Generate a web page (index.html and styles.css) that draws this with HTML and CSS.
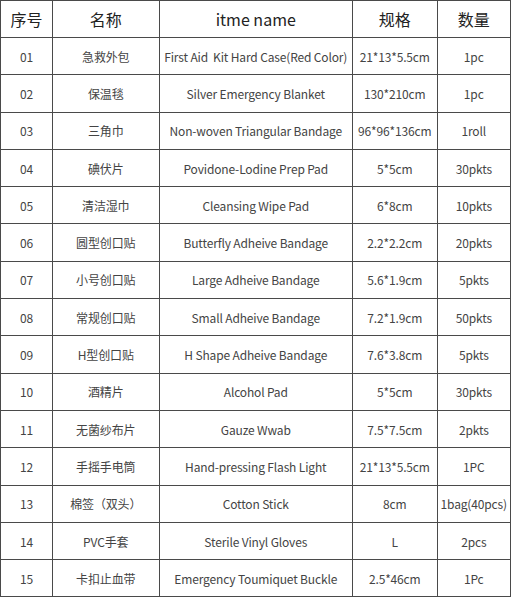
FILE: index.html
```html
<!DOCTYPE html>
<html lang="zh">
<head>
<meta charset="utf-8">
<link rel="stylesheet" href="styles.css">
</head>
<body>
<table class="list">
  <colgroup>
    <col class="c-no"><col class="c-cn"><col class="c-en"><col class="c-spec"><col class="c-qty">
  </colgroup>
  <thead>
    <tr><th>序号</th><th>名称</th><th>itme name</th><th>规格</th><th>数量</th></tr>
  </thead>
  <tbody>
    <tr><td>01</td><td>急救外包</td><td>First Aid&nbsp; Kit Hard Case(Red Color)</td><td>21*13*5.5cm</td><td>1pc</td></tr>
    <tr><td>02</td><td>保温毯</td><td>Silver Emergency Blanket</td><td>130*210cm</td><td>1pc</td></tr>
    <tr><td>03</td><td>三角巾</td><td>Non-woven Triangular Bandage</td><td>96*96*136cm</td><td>1roll</td></tr>
    <tr><td>04</td><td>碘伏片</td><td>Povidone-Lodine Prep Pad</td><td>5*5cm</td><td>30pkts</td></tr>
    <tr><td>05</td><td>清洁湿巾</td><td>Cleansing Wipe Pad</td><td>6*8cm</td><td>10pkts</td></tr>
    <tr><td>06</td><td>圆型创口贴</td><td>Butterfly Adheive Bandage</td><td>2.2*2.2cm</td><td>20pkts</td></tr>
    <tr><td>07</td><td>小号创口贴</td><td>Large Adheive Bandage</td><td>5.6*1.9cm</td><td>5pkts</td></tr>
    <tr><td>08</td><td>常规创口贴</td><td>Small Adheive Bandage</td><td>7.2*1.9cm</td><td>50pkts</td></tr>
    <tr><td>09</td><td>H型创口贴</td><td>H Shape Adheive Bandage</td><td>7.6*3.8cm</td><td>5pkts</td></tr>
    <tr><td>10</td><td>酒精片</td><td>Alcohol Pad</td><td>5*5cm</td><td>30pkts</td></tr>
    <tr><td>11</td><td>无菌纱布片</td><td>Gauze Wwab</td><td>7.5*7.5cm</td><td>2pkts</td></tr>
    <tr><td>12</td><td>手摇手电筒</td><td>Hand-pressing Flash Light</td><td>21*13*5.5cm</td><td>1PC</td></tr>
    <tr><td>13</td><td>棉签（双头）</td><td>Cotton Stick</td><td>8cm</td><td>1bag(40pcs)</td></tr>
    <tr><td>14</td><td>PVC手套</td><td>Sterile Vinyl Gloves</td><td>L</td><td>2pcs</td></tr>
    <tr><td>15</td><td>卡扣止血带</td><td>Emergency Toumiquet Buckle</td><td>2.5*46cm</td><td>1Pc</td></tr>
  </tbody>
</table>
</body>
</html>
```

FILE: styles.css
```css
html, body {
  margin: 0;
  padding: 0;
  background: #ffffff;
}

body {
  font-family: "Noto Sans CJK SC", "Noto Sans", sans-serif;
  color: #3a3a3a;
}

.list {
  border-collapse: collapse;
  table-layout: fixed;
  width: 510px;
}

.c-no { width: 52px; }
.c-cn { width: 106.5px; }
.c-en { width: 193.5px; }
.c-spec { width: 84.5px; }
.c-qty { width: 73.5px; }

.list th,
.list td {
  border: 1px solid #4a4a4a;
  text-align: center;
  vertical-align: middle;
  padding: 0;
  white-space: nowrap;
  overflow: visible;
}

.list th {
  height: 36px;
  font-size: 16px;
  font-weight: 400;
  color: #222222;
}

.list td {
  height: 36.3px;
  font-size: 12px;
  letter-spacing: -0.15px;
  color: #444444;
}
```
